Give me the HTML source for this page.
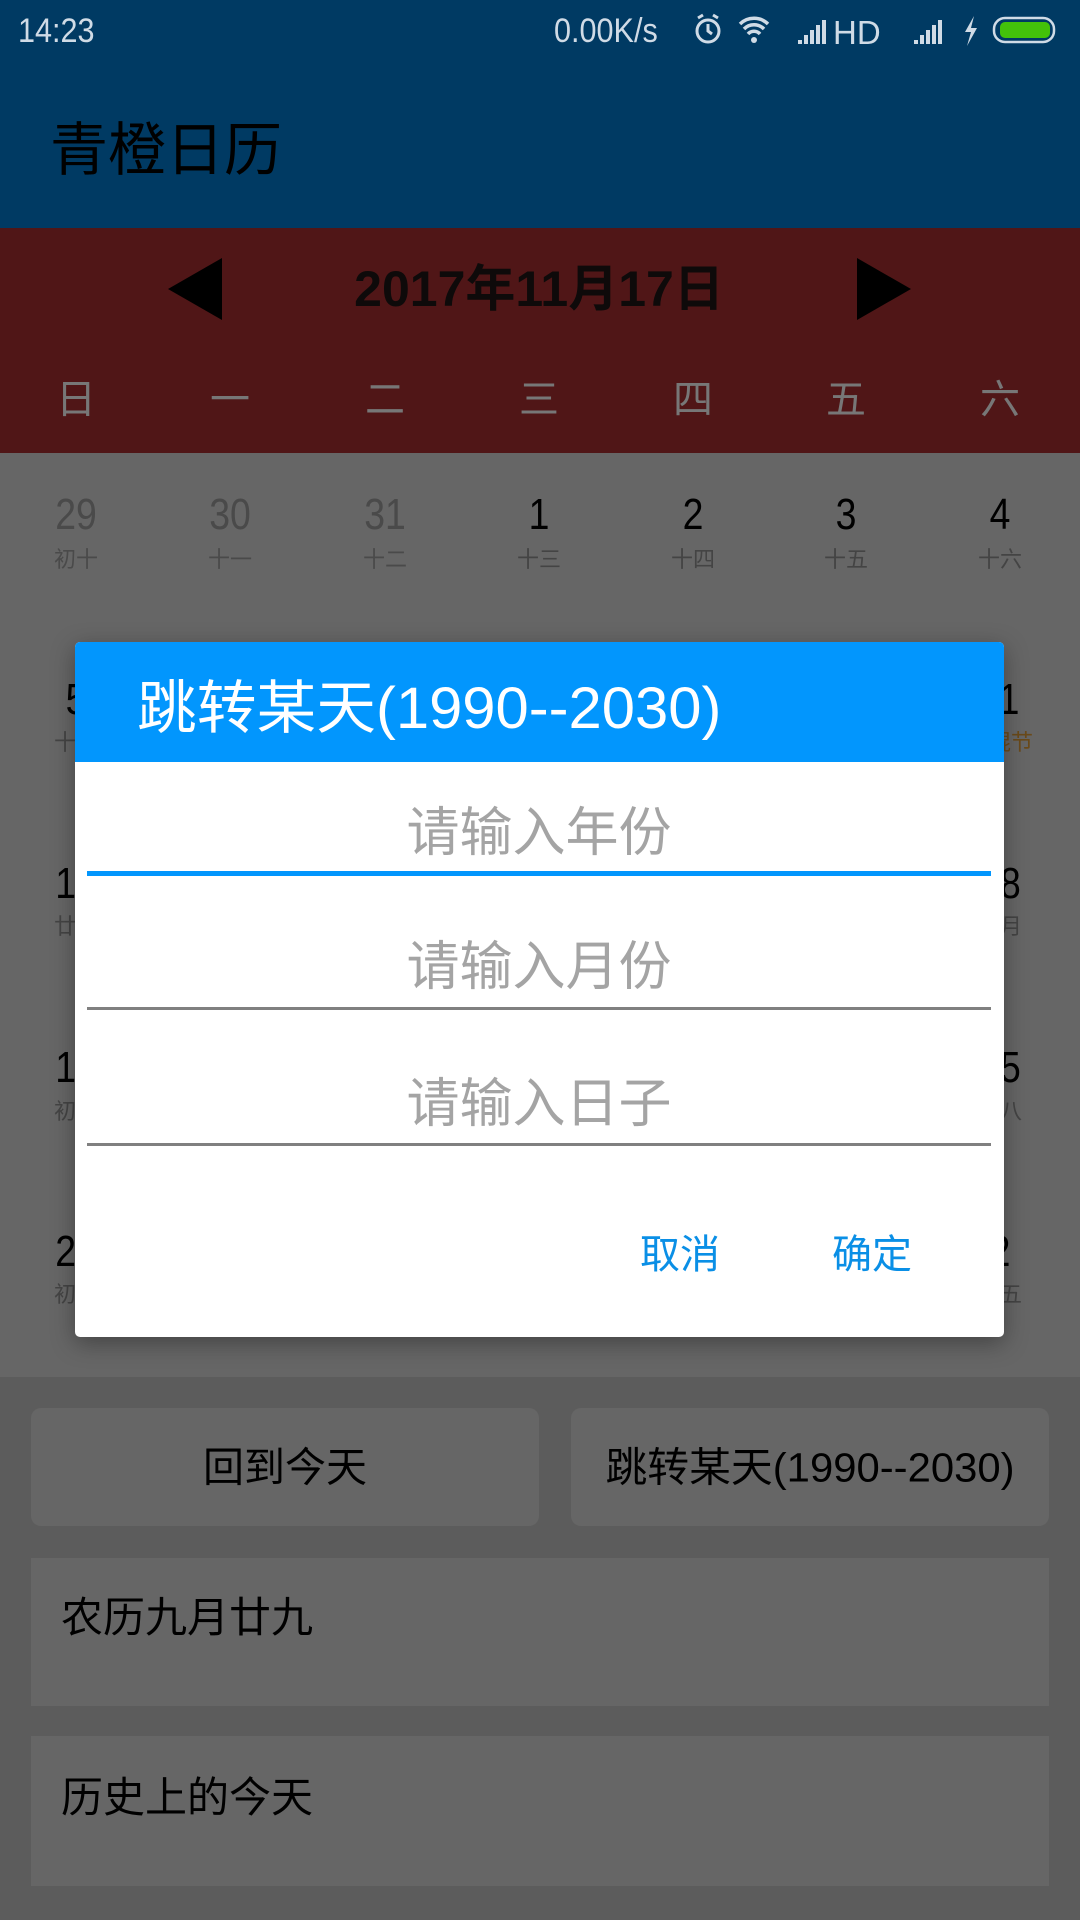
<!DOCTYPE html>
<html><head><meta charset="utf-8"><style>
*{margin:0;padding:0;box-sizing:border-box}
body{width:1080px;height:1920px;position:relative;overflow:hidden;background:#5c5c5c;font-family:"Liberation Sans","Noto Sans CJK SC",sans-serif}
.abs{position:absolute}
.c{position:absolute;transform:translate(-50%,-50%);white-space:nowrap;line-height:1}
.n{font-size:44px;transform:translate(-50%,-50%) scaleX(.85)}
</style></head><body>
<div class="abs" style="left:0;top:0;width:1080px;height:228px;background:#003a63"></div>
<div class="abs" style="left:18px;top:12px;color:#d0dbe6;font-size:34px;transform:scaleX(.9);transform-origin:left">14:23</div>
<div class="abs" style="left:554px;top:12px;color:#d0dbe6;font-size:34px;transform:scaleX(.9);transform-origin:left">0.00K/s</div>
<svg class="abs" style="left:690px;top:12px" width="400" height="36" viewBox="0 0 400 36">
<circle cx="18" cy="19" r="11" fill="none" stroke="#d0dbe6" stroke-width="3"/><path d="M18 12v7l4 3M8 6l5-3M28 6l-5-3" stroke="#d0dbe6" stroke-width="3" fill="none"/>
<path d="M50 12a20 20 0 0 1 28 0M54 17a14 14 0 0 1 20 0M58 22a8 8 0 0 1 12 0" stroke="#d0dbe6" stroke-width="3.5" fill="none"/><circle cx="64" cy="28" r="3" fill="#d0dbe6"/>
<path d="M108 32h4v-4h-4zM114 32h4v-9h-4zM120 32h4v-14h-4zM126 32h4v-19h-4zM132 32h4v-24h-4z" fill="#d0dbe6"/>
<text x="143" y="32" fill="#d0dbe6" font-size="33" font-family="Liberation Sans">HD</text>
<path d="M224 32h4v-4h-4zM230 32h4v-9h-4zM236 32h4v-14h-4zM242 32h4v-19h-4zM248 32h4v-24h-4z" fill="#d0dbe6"/>
<path d="M284 4l-9 16h6l-4 14 10-18h-6z" fill="#d0dbe6"/>
<rect x="304" y="6" width="60" height="24" rx="11" fill="none" stroke="#d0dbe6" stroke-width="2.5"/><rect x="310" y="10" width="50" height="16" rx="5" fill="#43c20a"/>
</svg>
<div class="abs" style="left:50px;top:122px;font-size:58px;color:#000;line-height:1">青橙日历</div>
<div class="abs" style="left:0;top:228px;width:1080px;height:225px;background:#501617"></div>
<svg class="abs" style="left:166px;top:255px" width="60" height="68"><path d="M56 3L2 34l54 31z" fill="#000"/></svg>
<svg class="abs" style="left:855px;top:255px" width="60" height="68"><path d="M2 3l54 31L2 65z" fill="#000"/></svg>
<div class="c" style="left:539px;top:289px;font-size:50px;font-weight:bold;color:#0e0a0a">2017年11月17日</div>
<div class="c" style="left:76px;top:400px;font-size:40px;color:#777">日</div>
<div class="c" style="left:230px;top:400px;font-size:40px;color:#777">一</div>
<div class="c" style="left:385px;top:400px;font-size:40px;color:#777">二</div>
<div class="c" style="left:539px;top:400px;font-size:40px;color:#777">三</div>
<div class="c" style="left:693px;top:400px;font-size:40px;color:#777">四</div>
<div class="c" style="left:846px;top:400px;font-size:40px;color:#777">五</div>
<div class="c" style="left:1000px;top:400px;font-size:40px;color:#777">六</div>
<div class="abs" style="left:0;top:453px;width:1080px;height:924px;background:#666"></div>
<div class="c n" style="left:76px;top:515px;color:#4a4a4a">29</div><div class="c" style="left:76px;top:560px;font-size:22px;color:#4a4a4a">初十</div>
<div class="c n" style="left:230px;top:515px;color:#4a4a4a">30</div><div class="c" style="left:230px;top:560px;font-size:22px;color:#4a4a4a">十一</div>
<div class="c n" style="left:385px;top:515px;color:#4a4a4a">31</div><div class="c" style="left:385px;top:560px;font-size:22px;color:#4a4a4a">十二</div>
<div class="c n" style="left:539px;top:515px;color:#000">1</div><div class="c" style="left:539px;top:560px;font-size:22px;color:#444">十三</div>
<div class="c n" style="left:693px;top:515px;color:#000">2</div><div class="c" style="left:693px;top:560px;font-size:22px;color:#444">十四</div>
<div class="c n" style="left:846px;top:515px;color:#000">3</div><div class="c" style="left:846px;top:560px;font-size:22px;color:#444">十五</div>
<div class="c n" style="left:1000px;top:515px;color:#000">4</div><div class="c" style="left:1000px;top:560px;font-size:22px;color:#444">十六</div>
<div class="c n" style="left:76px;top:700px;color:#000">5</div><div class="c" style="left:76px;top:743px;font-size:22px;color:#444">十七</div>
<div class="c n" style="left:1000px;top:700px;color:#000">11</div><div class="c" style="left:1000px;top:743px;font-size:22px;color:#6a4a1a">光棍节</div>
<div class="c n" style="left:76px;top:884px;color:#000">12</div><div class="c" style="left:76px;top:927px;font-size:22px;color:#444">廿四</div>
<div class="c n" style="left:1000px;top:884px;color:#000">18</div><div class="c" style="left:1000px;top:927px;font-size:22px;color:#444">十月</div>
<div class="c n" style="left:76px;top:1068px;color:#000">19</div><div class="c" style="left:76px;top:1112px;font-size:22px;color:#444">初二</div>
<div class="c n" style="left:1000px;top:1068px;color:#000">25</div><div class="c" style="left:1000px;top:1112px;font-size:22px;color:#444">初八</div>
<div class="c n" style="left:76px;top:1252px;color:#000">26</div><div class="c" style="left:76px;top:1295px;font-size:22px;color:#444">初九</div>
<div class="c n" style="left:1000px;top:1252px;color:#000">2</div><div class="c" style="left:1000px;top:1295px;font-size:22px;color:#444">十五</div>

<div class="abs" style="left:31px;top:1408px;width:508px;height:118px;background:#666;border-radius:10px"></div>
<div class="c" style="left:285px;top:1468px;font-size:41px;color:#000">回到今天</div>
<div class="abs" style="left:571px;top:1408px;width:478px;height:118px;background:#666;border-radius:10px"></div>
<div class="c" style="left:810px;top:1468px;font-size:41px;color:#000;transform:translate(-50%,-50%) scaleX(1.02)">跳转某天(1990--2030)</div>
<div class="abs" style="left:31px;top:1558px;width:1018px;height:148px;background:#666"></div>
<div class="abs" style="left:61px;top:1597px;font-size:42px;color:#000;line-height:1">农历九月廿九</div>
<div class="abs" style="left:31px;top:1736px;width:1018px;height:150px;background:#666"></div>
<div class="abs" style="left:61px;top:1777px;font-size:42px;color:#000;line-height:1">历史上的今天</div>

<div class="abs" style="left:75px;top:642px;width:929px;height:695px;background:#fff;border-radius:5px;overflow:hidden;box-shadow:0 6px 24px rgba(0,0,0,.35)">
<div class="abs" style="left:0;top:0;width:929px;height:120px;background:#0296fd"></div>
<div class="abs" style="left:62px;top:38px;font-size:58px;color:#fff;line-height:1;white-space:nowrap;transform:scaleX(1.03);transform-origin:left">跳转某天(1990--2030)</div>
<div class="c" style="left:464px;top:191px;font-size:53px;color:#a4a4a4">请输入年份</div>
<div class="abs" style="left:12px;top:229px;width:904px;height:5px;background:#0296fd"></div>
<div class="c" style="left:464px;top:325px;font-size:53px;color:#a4a4a4">请输入月份</div>
<div class="abs" style="left:12px;top:365px;width:904px;height:3px;background:#808080"></div>
<div class="c" style="left:464px;top:462px;font-size:53px;color:#a4a4a4">请输入日子</div>
<div class="abs" style="left:12px;top:501px;width:904px;height:3px;background:#808080"></div>
<div class="c" style="left:605px;top:613px;font-size:40px;color:#0a8fe6">取消</div>
<div class="c" style="left:797px;top:613px;font-size:40px;color:#0a8fe6">确定</div>
</div>
</body></html>
